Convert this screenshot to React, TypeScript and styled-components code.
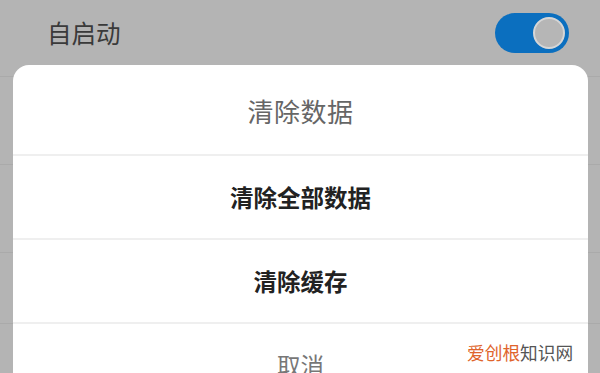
import React, { FC } from "react";
import styled, { createGlobalStyle } from "styled-components";

const GlobalStyle = createGlobalStyle`
  html, body {
    margin: 0;
    padding: 0;
    width: 600px;
    height: 373px;
    overflow: hidden;
    background: #b4b4b4;
    font-family: "Noto Sans CJK SC", "Noto Sans", sans-serif;
  }
`;

type Option = {
  label: string;
  tone: "strong" | "muted";
};

const options: Option[] = [
  { label: "清除全部数据", tone: "strong" },
  { label: "清除缓存", tone: "strong" },
  { label: "取消", tone: "muted" },
];

const App: FC = () => {
  return (
    <>
      <GlobalStyle />
      <Page>
        <SettingRow $height={77}>
          <SettingLabel>自启动</SettingLabel>
          <Toggle>
            <Knob />
          </Toggle>
        </SettingRow>
        <SettingRow $height={88} />
        <SettingRow $height={88} />
        <SettingRow $height={71} />
        <SettingRow $height={60} />

        <Sheet>
          <SheetTitle>清除数据</SheetTitle>
          {options.map((o) => (
            <SheetOption key={o.label} $tone={o.tone}>
              {o.label}
            </SheetOption>
          ))}
        </Sheet>

        <Watermark>
          <Accent>爱创根</Accent>知识网
        </Watermark>
      </Page>
    </>
  );
};

export default App;

const Page = styled.div`
  position: relative;
  width: 600px;
  height: 373px;
  overflow: hidden;
  background: #b4b4b4;
  display: flex;
  flex-direction: column;
`;

const SettingRow = styled.div<{ $height: number }>`
  flex: none;
  height: ${(p) => p.$height}px;
  box-sizing: border-box;
  border-bottom: 1px solid #aaaaaa;
  display: flex;
  align-items: flex-start;
  justify-content: space-between;
  padding: 0 31px 0 47px;
`;

const SettingLabel = styled.span`
  margin-top: 17px;
  font-size: 24.5px;
  line-height: 32px;
  color: #3a3a3a;
`;

const Toggle = styled.div`
  margin-top: 13px;
  width: 74px;
  height: 40px;
  border-radius: 20px;
  background: #0b6fbf;
  display: flex;
  align-items: center;
  justify-content: flex-end;
  padding: 0 4px;
  box-sizing: border-box;
`;

const Knob = styled.div`
  width: 32px;
  height: 32px;
  border-radius: 50%;
  box-sizing: border-box;
  background: #b6b6b6;
  border: 2px solid #d6d6d6;
`;

const Sheet = styled.div`
  position: absolute;
  top: 65px;
  left: 13px;
  width: 575px;
  background: #ffffff;
  border-radius: 16px 16px 0 0;
  display: flex;
  flex-direction: column;
`;

const SheetTitle = styled.div`
  height: 89px;
  display: flex;
  align-items: center;
  justify-content: center;
  padding-top: 2px;
  box-sizing: border-box;
  font-size: 26px;
  color: #666666;
  letter-spacing: 0.5px;
`;

const SheetOption = styled.div<{ $tone: "strong" | "muted" }>`
  height: 84px;
  box-sizing: border-box;
  border-top: 2px solid #efefef;
  display: flex;
  align-items: center;
  justify-content: center;
  font-size: 23.5px;
  font-weight: ${(p) => (p.$tone === "strong" ? 700 : 400)};
  color: ${(p) => (p.$tone === "strong" ? "#222222" : "#777777")};
`;

const Watermark = styled.div`
  position: absolute;
  left: 467px;
  top: 340px;
  font-size: 17.7px;
  line-height: 24px;
  color: #555555;
  white-space: nowrap;
`;

const Accent = styled.span`
  color: #e0642c;
`;
